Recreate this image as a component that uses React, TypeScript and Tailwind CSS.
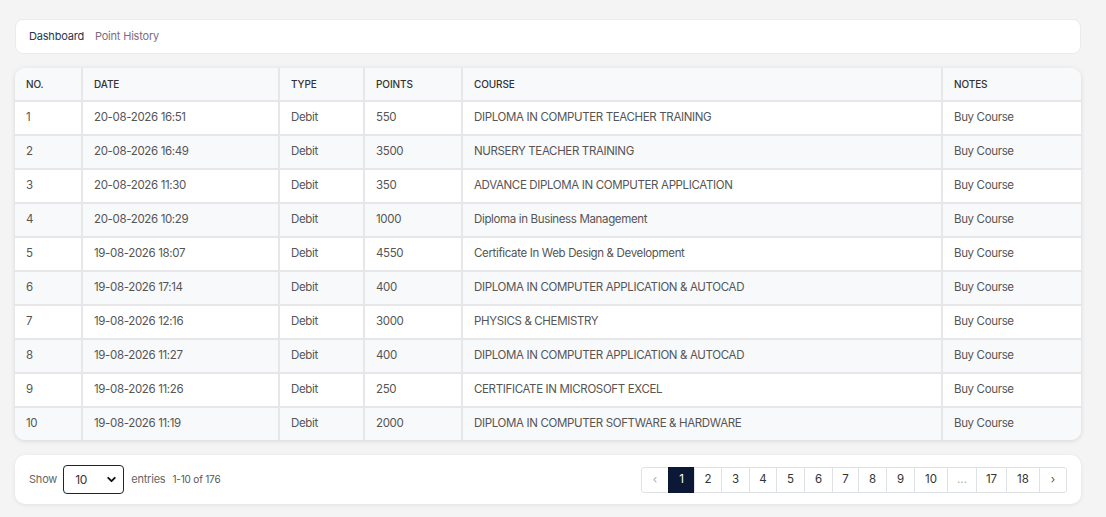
import { ChevronDown } from "lucide-react";

type Entry = {
  no: number;
  date: string;
  type: string;
  points: string;
  course: string;
  notes: string;
};

const ENTRIES: Entry[] = [
  { no: 1, date: "20-08-2026 16:51", type: "Debit", points: "550", course: "DIPLOMA IN COMPUTER TEACHER TRAINING", notes: "Buy Course" },
  { no: 2, date: "20-08-2026 16:49", type: "Debit", points: "3500", course: "NURSERY TEACHER TRAINING", notes: "Buy Course" },
  { no: 3, date: "20-08-2026 11:30", type: "Debit", points: "350", course: "ADVANCE DIPLOMA IN COMPUTER APPLICATION", notes: "Buy Course" },
  { no: 4, date: "20-08-2026 10:29", type: "Debit", points: "1000", course: "Diploma in Business Management", notes: "Buy Course" },
  { no: 5, date: "19-08-2026 18:07", type: "Debit", points: "4550", course: "Certificate In Web Design & Development", notes: "Buy Course" },
  { no: 6, date: "19-08-2026 17:14", type: "Debit", points: "400", course: "DIPLOMA IN COMPUTER APPLICATION & AUTOCAD", notes: "Buy Course" },
  { no: 7, date: "19-08-2026 12:16", type: "Debit", points: "3000", course: "PHYSICS & CHEMISTRY", notes: "Buy Course" },
  { no: 8, date: "19-08-2026 11:27", type: "Debit", points: "400", course: "DIPLOMA IN COMPUTER APPLICATION & AUTOCAD", notes: "Buy Course" },
  { no: 9, date: "19-08-2026 11:26", type: "Debit", points: "250", course: "CERTIFICATE IN MICROSOFT EXCEL", notes: "Buy Course" },
  { no: 10, date: "19-08-2026 11:19", type: "Debit", points: "2000", course: "DIPLOMA IN COMPUTER SOFTWARE & HARDWARE", notes: "Buy Course" },
];

const HEADERS = ["NO.", "DATE", "TYPE", "POINTS", "COURSE", "NOTES"];

// page buttons overlap by 1px, widths taken from the design
const PAGES = [
  { label: "1", w: "w-[27px]" },
  { label: "2", w: "w-[28px]" },
  { label: "3", w: "w-[29px]" },
  { label: "4", w: "w-[28px]" },
  { label: "5", w: "w-[29px]" },
  { label: "6", w: "w-[29px]" },
  { label: "7", w: "w-[27px]" },
  { label: "8", w: "w-[29px]" },
  { label: "9", w: "w-[29px]" },
  { label: "10", w: "w-[34px]" },
  { label: "...", w: "w-[30px]" },
  { label: "17", w: "w-[31px]" },
  { label: "18", w: "w-[34px]" },
];

// column widths add up to the 1066px card
const COLS = "grid grid-cols-[68px_197px_85px_98px_480px_138px]";

export default function App() {
  return (
    <div
      className="min-h-[517px] bg-[#f4f4f5] px-[15px] pt-[19px]"
      style={{ fontFamily: "Inter, 'Noto Sans', sans-serif" }}
    >
      <div className="w-[1066px]">
        {/* breadcrumb */}
        <div className="flex h-[35px] items-center gap-[11px] rounded-lg border border-[#ebebeb] bg-white px-[13px] text-[11px] tracking-[-0.2px]">
          <span className="text-[#27364d]">Dashboard</span>
          <span className="text-[#7e6c80]">Point History</span>
        </div>

        {/* table */}
        <div className="mt-[14px] overflow-hidden rounded-[10px] bg-white shadow-[0_1px_5px_rgba(0,0,0,0.12)]">
          <div className={COLS + " h-[32px] bg-[#f8f9fb]"}>
            {HEADERS.map((h, i) => (
              <div
                key={h}
                className={
                  "flex items-center pl-[11px] text-[10px] font-medium tracking-[-0.1px] text-[#333] " +
                  (i < HEADERS.length - 1 ? "border-r-2 border-[#e7e7e9]" : "")
                }
              >
                {h}
              </div>
            ))}
          </div>
          {ENTRIES.map((e, r) => {
            const cells = [String(e.no), e.date, e.type, e.points, e.course, e.notes];
            return (
              <div
                key={e.no}
                className={
                  COLS +
                  " h-[34px] border-t-2 border-[#e7e7e9] " +
                  (r % 2 === 1 ? "bg-[#f8f9fb]" : "bg-white")
                }
              >
                {cells.map((c, i) => (
                  <div
                    key={i}
                    className={
                      "flex items-center pl-[11px] text-[11.5px] tracking-[-0.35px] text-[#555] " +
                      (i < cells.length - 1 ? "border-r-2 border-[#e7e7e9]" : "")
                    }
                  >
                    {c}
                  </div>
                ))}
              </div>
            );
          })}
        </div>

        {/* footer: page size + pagination */}
        <div className="mt-[15px] flex h-[49px] items-center justify-between rounded-[10px] bg-white px-[14px] shadow-[0_1px_4px_rgba(0,0,0,0.08)]">
          <div className="flex items-center text-[11px] tracking-[-0.2px] text-[#666]">
            <span>Show</span>
            <div className="relative ml-[6px] h-[29px] w-[61px]">
              <select
                defaultValue="10"
                className="h-full w-full appearance-none rounded-[4px] border border-[#1c2438] bg-white pl-[11px] text-[12px] text-[#333] outline-none"
              >
                <option>10</option>
                <option>25</option>
                <option>50</option>
                <option>100</option>
              </select>
              <ChevronDown
                className="pointer-events-none absolute right-[6px] top-[8px] size-[13px] text-[#111]"
                strokeWidth={3.5}
              />
            </div>
            <span className="ml-[7px]">entries</span>
            <span className="ml-[7px] text-[10px] text-[#555]">1-10 of 176</span>
          </div>

          <div className="flex h-[26px] text-[11.5px] text-[#333]">
            <button
              type="button"
              className="flex w-[28px] items-center justify-center rounded-l-[3px] border border-[#dee2e6] text-[#aaa]"
            >
              ‹
            </button>
            {PAGES.map((p) => (
              <button
                key={p.label}
                type="button"
                className={
                  "-ml-px flex items-center justify-center border " +
                  p.w +
                  " " +
                  (p.label === "1"
                    ? "border-[#0b1836] bg-[#0b1836] text-white"
                    : p.label === "..."
                      ? "border-[#dee2e6] text-[#aaa]"
                      : "border-[#dee2e6] bg-white")
                }
              >
                {p.label}
              </button>
            ))}
            <button
              type="button"
              className="-ml-px flex w-[28px] items-center justify-center rounded-r-[3px] border border-[#dee2e6] text-[#555]"
            >
              ›
            </button>
          </div>
        </div>
      </div>
    </div>
  );
}
